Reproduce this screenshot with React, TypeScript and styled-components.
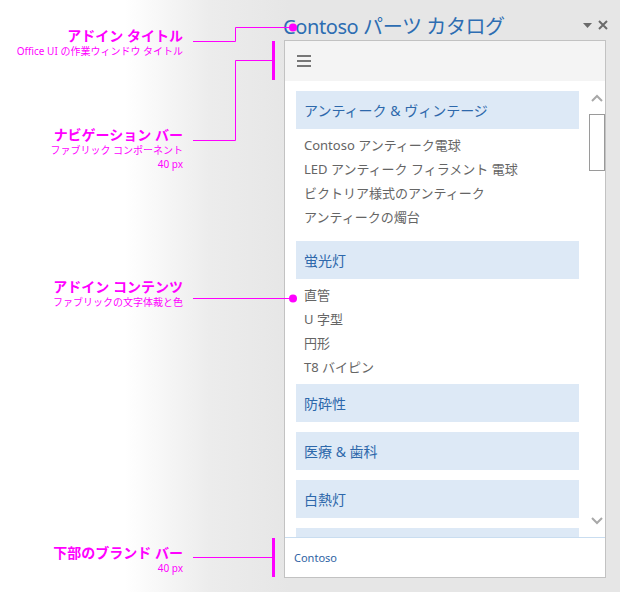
import React from 'react';
import styled, { createGlobalStyle } from 'styled-components';

const GlobalStyle = createGlobalStyle`
  html, body {
    margin: 0;
    padding: 0;
  }
  body {
    font-family: "Noto Sans", "Noto Sans CJK JP", sans-serif;
  }
`;

const Page = styled.div`
  position: relative;
  width: 620px;
  height: 592px;
  display: flex;
  overflow: hidden;
  background: linear-gradient(90deg, #ffffff 125px, #ececec 210px, #e6e6e6 290px);
`;

const AnnotationColumn = styled.div`
  position: relative;
  width: 284px;
  flex-shrink: 0;
`;

const Callout = styled.div<{ top: number }>`
  position: absolute;
  top: ${({ top }) => top}px;
  right: 101px;
  text-align: right;
  color: #ff00ff;
  white-space: nowrap;
`;

const CalloutTitle = styled.div`
  font-size: 14px;
  line-height: 16px;
  font-weight: 700;
`;

const CalloutNote = styled.div`
  font-size: 10px;
  line-height: 14px;
`;

const Connectors = styled.svg`
  position: absolute;
  left: 0;
  top: 0;
  pointer-events: none;
`;

const PaneColumn = styled.div`
  width: 322px;
  display: flex;
  flex-direction: column;
`;

const TitleRow = styled.div`
  height: 30px;
  padding-top: 10px;
  display: flex;
  align-items: center;
  justify-content: space-between;
`;

const PaneTitle = styled.h1`
  margin: 0 0 0 -1px;
  font-size: 20px;
  font-weight: 400;
  color: #2d6db2;
  letter-spacing: -0.4px;
`;

const TitleActions = styled.div`
  display: flex;
  align-items: center;
  gap: 6px;
  margin-right: -2px;
  color: #6a6a6a;
`;

const Pane = styled.div`
  height: 536px;
  border: 1px solid #c2c2c2;
  background: #ffffff;
  display: flex;
  flex-direction: column;
`;

const NavBar = styled.div`
  height: 40px;
  flex-shrink: 0;
  background: #f4f4f4;
  display: flex;
  align-items: center;
  padding-left: 12px;
`;

const Body = styled.div`
  flex: 1;
  display: flex;
  overflow: hidden;
`;

const List = styled.div`
  width: 283px;
  padding: 10px 0 0 11px;
`;

const Section = styled.section<{ after: number }>`
  margin-bottom: ${({ after }) => after}px;
`;

const CategoryHeader = styled.div`
  height: 38px;
  background: #dde9f6;
  color: #2d68ab;
  font-size: 14px;
  display: flex;
  align-items: center;
  padding-left: 8px;
`;

const Items = styled.ul`
  list-style: none;
  margin: 0;
  padding: 4px 0 0 8px;
`;

const Item = styled.li`
  height: 24px;
  line-height: 24px;
  font-size: 13px;
  color: #656565;
`;

const ScrollTrack = styled.div`
  width: 16px;
  margin-left: 10px;
  display: flex;
  flex-direction: column;
  align-items: center;
  padding: 13px 0 12px;
`;

const ScrollThumb = styled.div`
  width: 14px;
  height: 55px;
  margin-top: 12px;
  border: 1px solid #9a9a9a;
  background: #fff;
`;

const ScrollSpacer = styled.div`
  flex: 1;
`;

const Footer = styled.div`
  height: 39px;
  flex-shrink: 0;
  border-top: 1px solid #c9ddf0;
  display: flex;
  align-items: center;
  padding-left: 9px;
  font-size: 11px;
  color: #2f64a4;
`;

const categories = [
  {
    name: 'アンティーク & ヴィンテージ',
    items: ['Contoso アンティーク電球', 'LED アンティーク フィラメント 電球', 'ビクトリア様式のアンティーク', 'アンティークの燭台'],
    after: 12,
  },
  { name: '蛍光灯', items: ['直管', 'U 字型', '円形', 'T8 バイピン'], after: 5 },
  { name: '防砕性', items: [], after: 10 },
  { name: '医療 & 歯科', items: [], after: 10 },
  { name: '白熱灯', items: [], after: 10 },
  { name: '', items: [], after: 10 },
];

const Hamburger = () => (
  <svg width="14" height="12" viewBox="0 0 14 12">
    <rect x="0" y="0" width="14" height="2" fill="#777" />
    <rect x="0" y="5" width="14" height="2" fill="#777" />
    <rect x="0" y="10" width="14" height="2" fill="#777" />
  </svg>
);

const Chevron = ({ up }: { up?: boolean }) => (
  <svg width="12" height="8" viewBox="0 0 12 8">
    <polyline
      points={up ? '1,7 6,2 11,7' : '1,1 6,6 11,1'}
      fill="none"
      stroke="#a8a8a8"
      strokeWidth="2"
    />
  </svg>
);

const App: React.FC = () => {
  return (
    <Page>
      <GlobalStyle />
      <AnnotationColumn>
        <Callout top={28}>
          <CalloutTitle>アドイン タイトル</CalloutTitle>
          <CalloutNote>Office UI の作業ウィンドウ タイトル</CalloutNote>
        </Callout>
        <Callout top={127}>
          <CalloutTitle>ナビゲーション バー</CalloutTitle>
          <CalloutNote>ファブリック コンポーネント</CalloutNote>
          <CalloutNote>40 px</CalloutNote>
        </Callout>
        <Callout top={279}>
          <CalloutTitle>アドイン コンテンツ</CalloutTitle>
          <CalloutNote>ファブリックの文字体裁と色</CalloutNote>
        </Callout>
        <Callout top={545}>
          <CalloutTitle>下部のブランド バー</CalloutTitle>
          <CalloutNote>40 px</CalloutNote>
        </Callout>
      </AnnotationColumn>

      <PaneColumn>
        <TitleRow>
          <PaneTitle>Contoso パーツ カタログ</PaneTitle>
          <TitleActions>
            <svg width="9" height="5" viewBox="0 0 9 5">
              <polygon points="0,0 9,0 4.5,5" fill="#6a6a6a" />
            </svg>
            <svg width="10" height="10" viewBox="0 0 10 10">
              <path d="M1 1 L9 9 M9 1 L1 9" stroke="#6a6a6a" strokeWidth="2" />
            </svg>
          </TitleActions>
        </TitleRow>
        <Pane>
          <NavBar>
            <Hamburger />
          </NavBar>
          <Body>
            <List>
              {categories.map((c, idx) => (
                <Section key={idx} after={c.after}>
                  <CategoryHeader>{c.name}</CategoryHeader>
                  {c.items.length > 0 && (
                    <Items>
                      {c.items.map((i) => (
                        <Item key={i}>{i}</Item>
                      ))}
                    </Items>
                  )}
                </Section>
              ))}
            </List>
            <ScrollTrack>
              <Chevron up />
              <ScrollThumb />
              <ScrollSpacer />
              <Chevron />
            </ScrollTrack>
          </Body>
          <Footer>Contoso</Footer>
        </Pane>
      </PaneColumn>

      <Connectors width="620" height="592" viewBox="0 0 620 592">
        <polyline points="193,41.5 235.5,41.5 235.5,27.5 293,27.5" fill="none" stroke="#ff00ff" strokeWidth="1" />
        <circle cx="293" cy="27.5" r="4" fill="#ff00ff" />
        <polyline points="193,140.5 235.5,140.5 235.5,60.5 273,60.5" fill="none" stroke="#ff00ff" strokeWidth="1" />
        <rect x="272" y="41" width="3" height="39" fill="#ff00ff" />
        <line x1="193" y1="298.5" x2="293" y2="298.5" stroke="#ff00ff" strokeWidth="1" />
        <circle cx="293" cy="298.5" r="4" fill="#ff00ff" />
        <line x1="193" y1="557.5" x2="273" y2="557.5" stroke="#ff00ff" strokeWidth="1" />
        <rect x="272" y="538" width="3" height="39" fill="#ff00ff" />
      </Connectors>
    </Page>
  );
};

export default App;
